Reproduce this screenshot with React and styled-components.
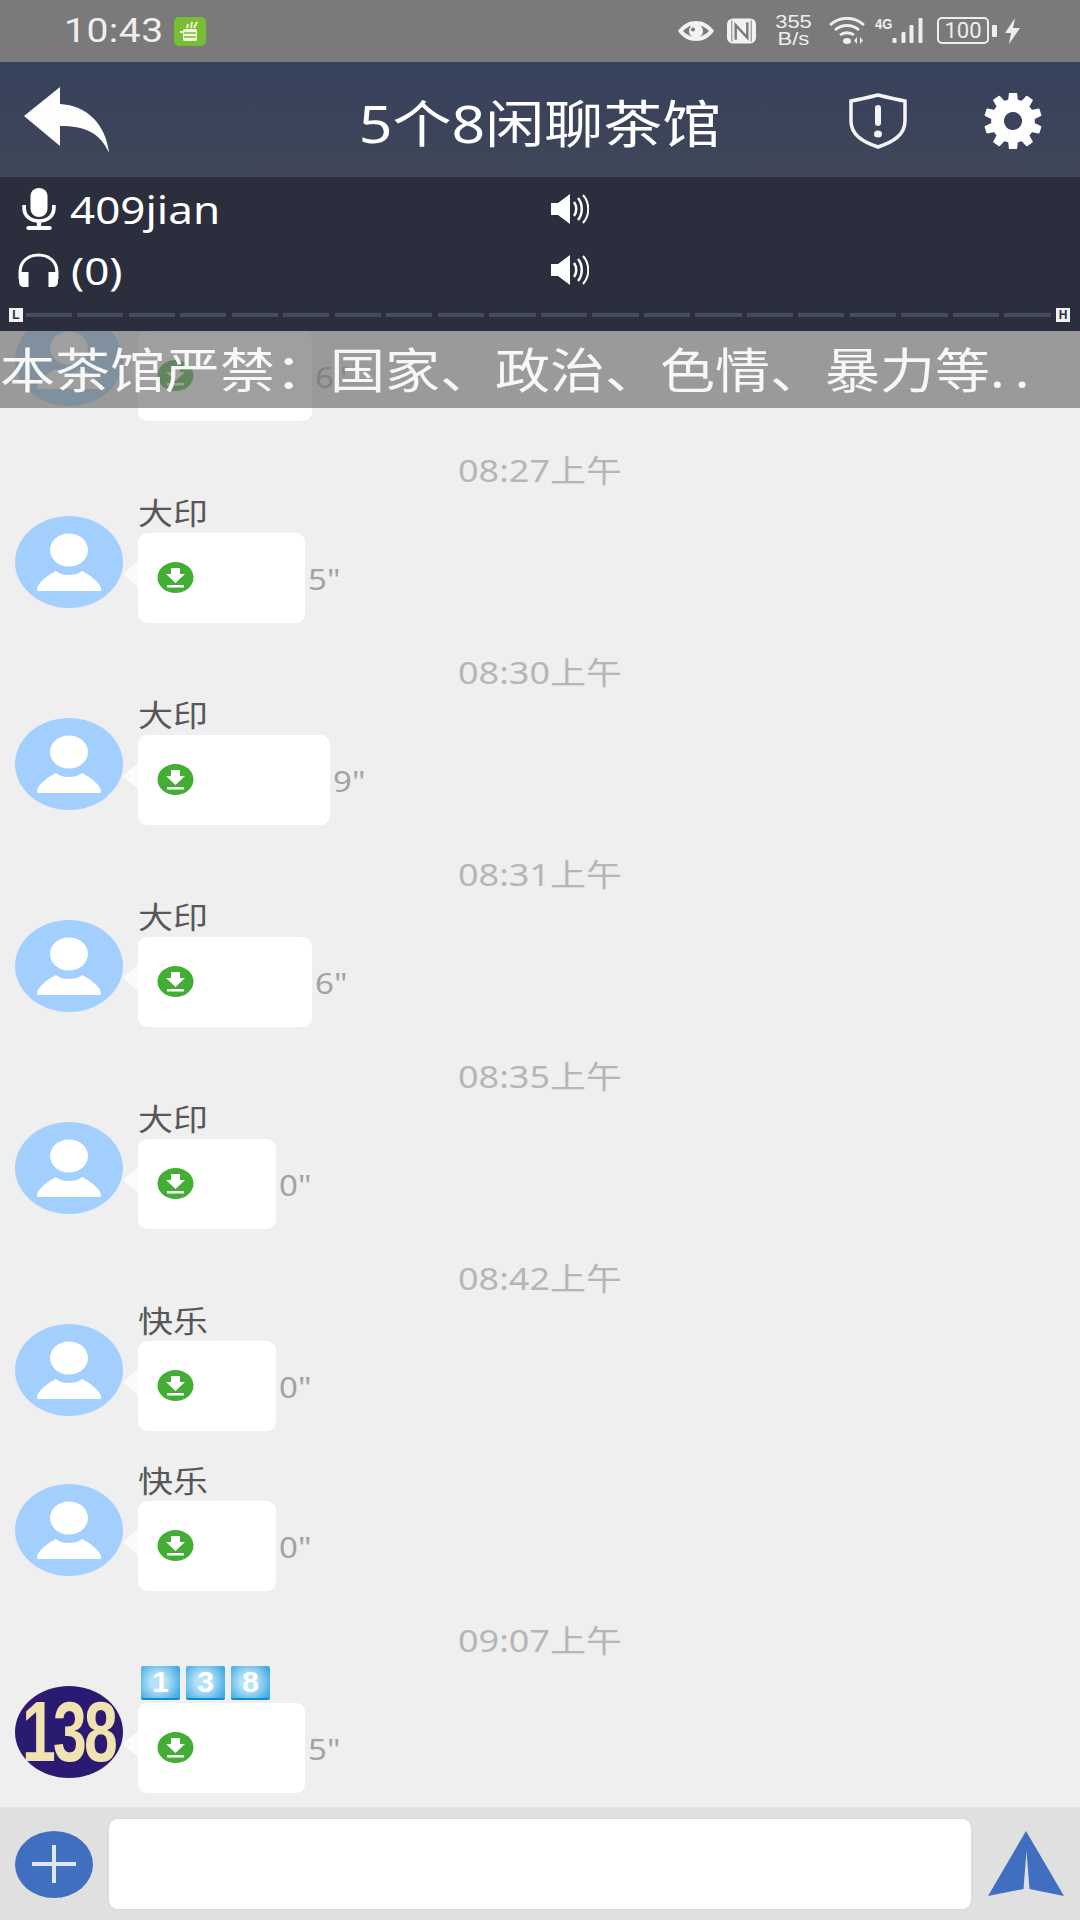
import React from 'react';
import styled, { createGlobalStyle } from 'styled-components';

const Global = createGlobalStyle`
  html, body { margin: 0; padding: 0; background: #efefef; }
  * { box-sizing: border-box; }
`;
const FONT = `"Noto Sans", "Noto Sans CJK SC", sans-serif`;

const Page = styled.div`
  width: 1080px; height: 1920px; display: flex; flex-direction: column; overflow: hidden;
  font-family: ${FONT}; background: #efefef;
`;
/* The source picture is slightly squashed vertically; text follows it */
const Squashed = styled.span`
  display: inline-block; transform: scaleY(0.86); white-space: nowrap;
`;

const StatusBar = styled.div`
  height: 62px; flex: none; background: #7a7a7a; display: flex; align-items: center;
  padding: 0 60px 0 64px; color: #f2f2f2;
`;
const Clock = styled(Squashed)`
  font-family: Roboto, ${FONT}; font-size: 39px; letter-spacing: 0.5px; color: #efefef; margin-top: -1px;
`;
const AppBadge = styled.div`
  width: 32px; height: 29px; margin-left: 10px; border-radius: 5px; background: #79bd35;
  display: flex; align-items: center; justify-content: center;
`;
const StatusRight = styled.div`
  margin-left: auto; display: flex; align-items: center; margin-top: -1px;
`;
const Speed = styled.div`
  font-family: "Liberation Sans", sans-serif; font-size: 18px; line-height: 17px; text-align: center;
  width: 39px; margin: 0 16px 0 18px; color: #eee; transform: scaleX(1.22);
`;
const Net = styled.div`
  font-family: "Liberation Sans", sans-serif; font-size: 13px; line-height: 14px; font-weight: 700; color: #eee;
  margin: -14px 0 0 10px; width: 17px; transform: scaleY(1.15);
`;
const Battery = styled.div`
  width: 52px; height: 27px; border: 2px solid #eee; border-radius: 5px; margin-left: 13px;
  font-family: Roboto, sans-serif; font-size: 22px; line-height: 23px; text-align: center; color: #eee;
`;
const BatteryCap = styled.div`
  width: 5px; height: 12px; margin-left: 3px; background: #eee; border-radius: 1px;
`;

const Header = styled.div`
  height: 115px; flex: none; position: relative; display: flex; align-items: center;
  background: linear-gradient(#36415b, #3f4659); padding: 0 36px 0 24px; color: #fff;
`;
const Title = styled(Squashed)`
  position: absolute; left: 0; right: 0; text-align: center; font-size: 59px; margin-top: 4px;
`;
const HeaderActions = styled.div`
  margin-left: auto; display: flex; align-items: center; gap: 74px; margin-top: 2px;
`;

const VoicePanel = styled.div`
  height: 154px; flex: none; background: #2b2f3d; color: #fff; display: flex; flex-direction: column;
`;
const VoiceRow = styled.div`
  display: grid; grid-template-columns: 551px auto; align-items: center; height: 62px; margin-top: ${p => p.$top}px;
`;
const VoiceInfo = styled.div`
  display: flex; align-items: center; padding-left: ${p => p.$pad}px; gap: ${p => p.$gap}px;
  font-size: 44px;
`;
const LevelRow = styled.div`
  display: flex; align-items: center; margin-top: auto; padding: 0 10px 3px 9px; height: 30px;
`;
const LevelBadge = styled.div`
  width: 14px; height: 14px; background: #f2f2f2; color: #2b2f3d; font: 700 12px/14px "Liberation Sans", sans-serif;
  text-align: center; flex: none;
`;
const LevelTrack = styled.div`
  flex: 1; height: 4px; margin: 0 3px;
  background: repeating-linear-gradient(90deg, #474c5a 0 46px, transparent 46px 51.500px);
`;

const Chat = styled.div`
  flex: 1; min-height: 0; position: relative; overflow: hidden; background: #efefef;
`;
const Notice = styled.div`
  position: absolute; left: 0; right: 0; top: 0; height: 77px; z-index: 2;
  background: rgba(112, 114, 112, 0.68); color: #f7f7f7; font-size: 55px; line-height: 77px; white-space: nowrap;
`;
const Dots = styled.span`
  letter-spacing: 10px;
`;
const List = styled.div`
  margin-top: -72px;
`;
const TimeRow = styled.div`
  height: 40px; margin-top: 30px; text-align: center; color: #b6b6b6; font-size: 36px; line-height: 40px;
`;
const Message = styled.div`
  display: flex; padding-left: 15px; margin-top: ${p => p.$gap}px;
`;
const Avatar = styled.div`
  width: 108px; height: 92px; margin-top: 25px; flex: none; border-radius: 50%;
  background: ${p => p.$bg}; display: flex; align-items: center; justify-content: center;
`;
const AvatarNumber = styled.span`
  font: 700 66px/1 "Liberation Sans", sans-serif; color: #f1e3b0; display: inline-block;
  transform: scale(0.92, 1.28); letter-spacing: -3px;
`;
const MsgBody = styled.div`
  margin-left: 15px;
`;
const Name = styled.div`
  height: 42px; font-size: 35px; line-height: 44px; color: #575757;
`;
const Tiles = styled.div`
  height: 42px; display: flex; gap: 6px; padding: 5px 0 0 3px;
`;
const Tile = styled.span`
  width: 39px; height: 34px; border-radius: 2px; color: #fff; font: 700 30px/32px "Liberation Sans", sans-serif;
  text-align: center; background: radial-gradient(circle at 45% 50%, #b5e2f8 0 30%, #3fa9e2 90%);
  border-bottom: 2px solid #0b8dd0;
`;
const BubbleRow = styled.div`
  display: flex; align-items: center;
`;
const Bubble = styled.div`
  position: relative; height: 90px; width: ${p => p.$w}px; background: #fff; border-radius: 9px;
  display: flex; align-items: center; padding: 0 0 2px 19px;
  &::before {
    content: ''; position: absolute; left: -15px; top: 28px; width: 0; height: 0;
    border-style: solid; border-width: 13px 15px 13px 0; border-color: transparent #fbfbfb transparent transparent;
  }
`;
const Duration = styled(Squashed)`
  margin-left: 3px; margin-top: 2px; font-size: 33px; color: #a3a3a3;
`;

const Footer = styled.div`
  height: 113px; flex: none; background: #e0e0e0; display: flex; align-items: center; padding: 0 16px 0 15px;
  border-top: 1px solid #e6e6e6;
`;
const PlusButton = styled.div`
  width: 78px; height: 67px; border-radius: 50%; background: #416fc0; display: flex; align-items: center; justify-content: center; flex: none;
`;
const InputBox = styled.div`
  width: 864px; height: 92px; margin-left: 15px; background: #fff; border-radius: 10px; flex: none; border: 1px solid #d9d9d9;
`;
const SendIcon = styled.svg`
  margin-left: auto; flex: none;
`;

const gearPath = (cx, cy, n, ro, ri) => {
  const pts = [];
  const step = (Math.PI * 2) / n;
  for (let i = 0; i < n; i++) {
    const a = i * step - Math.PI / 2;
    pts.push([a - step * 0.3, ri], [a - step * 0.17, ro], [a + step * 0.17, ro], [a + step * 0.3, ri]);
  }
  return pts.map(([a, r], i) => `${i ? 'L' : 'M'}${(cx + r * Math.cos(a)).toFixed(1)} ${(cy + r * Math.sin(a)).toFixed(1)}`).join(' ') + 'Z';
};

const Download = () => (
  <svg width="37" height="31" viewBox="0 0 37 31">
    <ellipse cx="18.5" cy="15.5" rx="18" ry="15.5" fill="#43ae34" />
    <path d="M14 6h9v6h5l-9.500 9L9 12h5z" fill="#fff" />
    <rect x="10" y="23" width="17" height="2.500" fill="#fff" />
  </svg>
);
const Person = () => (
  <svg width="108" height="92" viewBox="0 0 108 92">
    <ellipse cx="54" cy="34" rx="19" ry="16.500" fill="#fff" />
    <path d="M22 74c0-2 1-5 3-7 5-6 12-10 16-12 4 3 8 4 13 4s9-1 13-4c4 2 11 6 16 12 2 2 3 5 3 7 0 1-1 1-2 1H24c-1 0-2 0-2-1z" fill="#fff" />
  </svg>
);
const Speaker = () => (
  <svg width="38" height="30" viewBox="0 0 38 30">
    <path d="M0 9h7l12-9v30L7 21H0z" fill="#fff" />
    <path d="M23 8c3 4 3 10 0 14M27 4c5 6 5 16 0 22" fill="none" stroke="#fff" strokeWidth="2.500" />
    <path d="M32 1c7 8 7 20 0 28" fill="none" stroke="#fff" strokeWidth="2" />
  </svg>
);

const MSGS = [
  { name: '', w: 174, d: '6"', gap: 30 },
  { t: '08:27上午', name: '大印', w: 167, d: '5"' },
  { t: '08:30上午', name: '大印', w: 192, d: '9"' },
  { t: '08:31上午', name: '大印', w: 174, d: '6"' },
  { t: '08:35上午', name: '大印', w: 138, d: '0"' },
  { t: '08:42上午', name: '快乐', w: 138, d: '0"' },
  { name: '快乐', w: 138, d: '0"', gap: 28 },
  { t: '09:07上午', tiles: ['1', '3', '8'], w: 167, d: '5"', special: true },
];

export default function App() {
  return (
    <Page>
      <Global />
      <StatusBar>
        <Clock>10:43</Clock>
        <AppBadge>
          <svg width="22" height="22" viewBox="0 0 22 22">
            <rect x="4" y="9" width="14" height="12" rx="1.500" fill="#f2f5dc" />
            <path d="M5 13h12M5 17h12" stroke="#79bd35" strokeWidth="1.500" />
            <path d="M8 8l1-4M12 8l1-6M15 8l3-6M1 12h3" stroke="#f2f5dc" strokeWidth="2" />
          </svg>
        </AppBadge>
        <StatusRight>
          <svg width="38" height="22" viewBox="0 0 38 22">
            <path d="M1 11C6 4 12 1 19 1s13 3 18 10c-5 7-11 10-18 10S6 18 1 11z" fill="#f2f2f2" />
            <path d="M6 11c4-4 8-6 13-6s9 2 13 6c-4 4-8 6-13 6S10 15 6 11z" fill="#7a7a7a" />
            <circle cx="19" cy="11" r="7" fill="#f2f2f2" />
            <circle cx="16" cy="9.500" r="2" fill="#7a7a7a" />
          </svg>
          <svg width="29" height="26" viewBox="0 0 30 26" style={{ marginLeft: 12 }}>
            <rect width="30" height="26" rx="6" fill="#f2f2f2" />
            <path d="M5 2v22M25 2v22" stroke="#7a7a7a" strokeWidth="1" />
            <path d="M9 22V7l12 13V4" fill="none" stroke="#7a7a7a" strokeWidth="2.500" />
          </svg>
          <Speed>355<br />B/s</Speed>
          <svg width="36" height="28" viewBox="0 0 36 28">
            <path d="M1 8c10-9 24-9 34 0M6 13c7-6 17-6 24 0M11 18c4-3 10-3 14 0" fill="none" stroke="#eee" strokeWidth="2.800" />
            <ellipse cx="18" cy="24" rx="4" ry="3" fill="#eee" />
            <path d="M28 20v7l-3-3.500zM31 20v7l3-3.500z" fill="#eee" />
          </svg>
          <Net>4G</Net>
          <svg width="32" height="27" viewBox="0 0 31 27">
            <rect x="0" y="21" width="4" height="5" rx="1" fill="#eee" />
            <rect x="9" y="15" width="4" height="11" rx="1" fill="#eee" />
            <rect x="17" y="8" width="4" height="18" rx="1" fill="#eee" />
            <rect x="26" y="1" width="4" height="25" rx="1" fill="#eee" />
          </svg>
          <Battery>100</Battery>
          <BatteryCap />
          <svg width="15" height="26" viewBox="0 0 15 26" style={{ marginLeft: 8 }}>
            <path d="M10 0L0 15h6l-2 11 11-16H8z" fill="#eee" />
          </svg>
        </StatusRight>
      </StatusBar>

      <Header>
        <svg width="86" height="68" viewBox="0 0 86 68">
          <path d="M0 30L36 1v17c26 1 46 20 49 49C76 46 60 40 36 40v20z" fill="#fdfdfd" />
        </svg>
        <Title>5个8闲聊茶馆</Title>
        <HeaderActions>
          <svg width="60" height="56" viewBox="0 0 60 56">
            <path d="M3 8C14 6 22 4 30 2c8 2 16 4 27 6v20c0 14-12 21-27 26C15 49 3 42 3 28z" fill="none" stroke="#f4f4f4" strokeWidth="3.500" />
            <rect x="27" y="12" width="6" height="21" rx="3" fill="#f4f4f4" />
            <ellipse cx="30" cy="41" rx="4" ry="3.500" fill="#f4f4f4" />
          </svg>
          <svg width="62" height="56" viewBox="0 0 62 56">
            <path fillRule="evenodd" d={`${gearPath(31, 28, 10, 28, 21)} M31 18a10 10 0 1 0 .01 0Z`} fill="#fff" stroke="#fff" strokeWidth="2" strokeLinejoin="round" />
          </svg>
        </HeaderActions>
      </Header>

      <VoicePanel>
        <VoiceRow $top={1}>
          <VoiceInfo $pad={22} $gap={14}>
            <svg width="34" height="42" viewBox="0 0 32 42" preserveAspectRatio="none">
              <rect x="8" y="0" width="16" height="29" rx="8" fill="#fff" />
              <path d="M2 17v3c0 8 6 13 14 13s14-5 14-13v-3" fill="none" stroke="#fff" strokeWidth="3.500" />
              <rect x="14" y="32" width="4" height="6" fill="#fff" />
              <rect x="4" y="38" width="24" height="4" rx="2" fill="#fff" />
            </svg>
            <Squashed>409jian</Squashed>
          </VoiceInfo>
          <Speaker />
        </VoiceRow>
        <VoiceRow $top={0}>
          <VoiceInfo $pad={18} $gap={12}>
            <svg width="41" height="34" viewBox="0 0 39 34" preserveAspectRatio="none">
              <path d="M2 26V19C2 9 9 2 19.500 2S37 9 37 19v7" fill="none" stroke="#fff" strokeWidth="3" />
              <path d="M4 19h6v15H6c-3 0-5-2-5-5v-5c0-3 1-5 3-5zM35 19h-6v15h4c3 0 5-2 5-5v-5c0-3-1-5-3-5z" fill="#fff" />
            </svg>
            <Squashed>(0)</Squashed>
          </VoiceInfo>
          <Speaker />
        </VoiceRow>
        <LevelRow>
          <LevelBadge>L</LevelBadge>
          <LevelTrack />
          <LevelBadge>H</LevelBadge>
        </LevelRow>
      </VoicePanel>

      <Chat>
        <Notice><Squashed>{'本茶馆严禁\uFF1A国家、政治、色情、暴力等'}<Dots>..</Dots></Squashed></Notice>
        <List>
          {MSGS.map((m, i) => (
            <React.Fragment key={i}>
              {m.t && <TimeRow><Squashed>{m.t}</Squashed></TimeRow>}
              <Message $gap={m.t ? 0 : m.gap}>
                <Avatar $bg={m.special ? '#2a1a72' : '#a3cfff'}>
                  {m.special ? <AvatarNumber>138</AvatarNumber> : <Person />}
                </Avatar>
                <MsgBody>
                  {m.tiles
                    ? <Tiles>{m.tiles.map(c => <Tile key={c}>{c}</Tile>)}</Tiles>
                    : <Name><Squashed>{m.name}</Squashed></Name>}
                  <BubbleRow>
                    <Bubble $w={m.w}><Download /></Bubble>
                    <Duration>{m.d}</Duration>
                  </BubbleRow>
                </MsgBody>
              </Message>
            </React.Fragment>
          ))}
        </List>
      </Chat>

      <Footer>
        <PlusButton>
          <svg width="44" height="38" viewBox="0 0 44 38">
            <path d="M0 19h44M22 0v38" stroke="#dfe7f3" strokeWidth="4" />
          </svg>
        </PlusButton>
        <InputBox />
        <SendIcon width="76" height="66" viewBox="0 0 76 66">
          <path d="M38 0L76 65 41.500 58 38.500 20 35.500 58 0 65z" fill="#406fc2" />
        </SendIcon>
      </Footer>
    </Page>
  );
}
